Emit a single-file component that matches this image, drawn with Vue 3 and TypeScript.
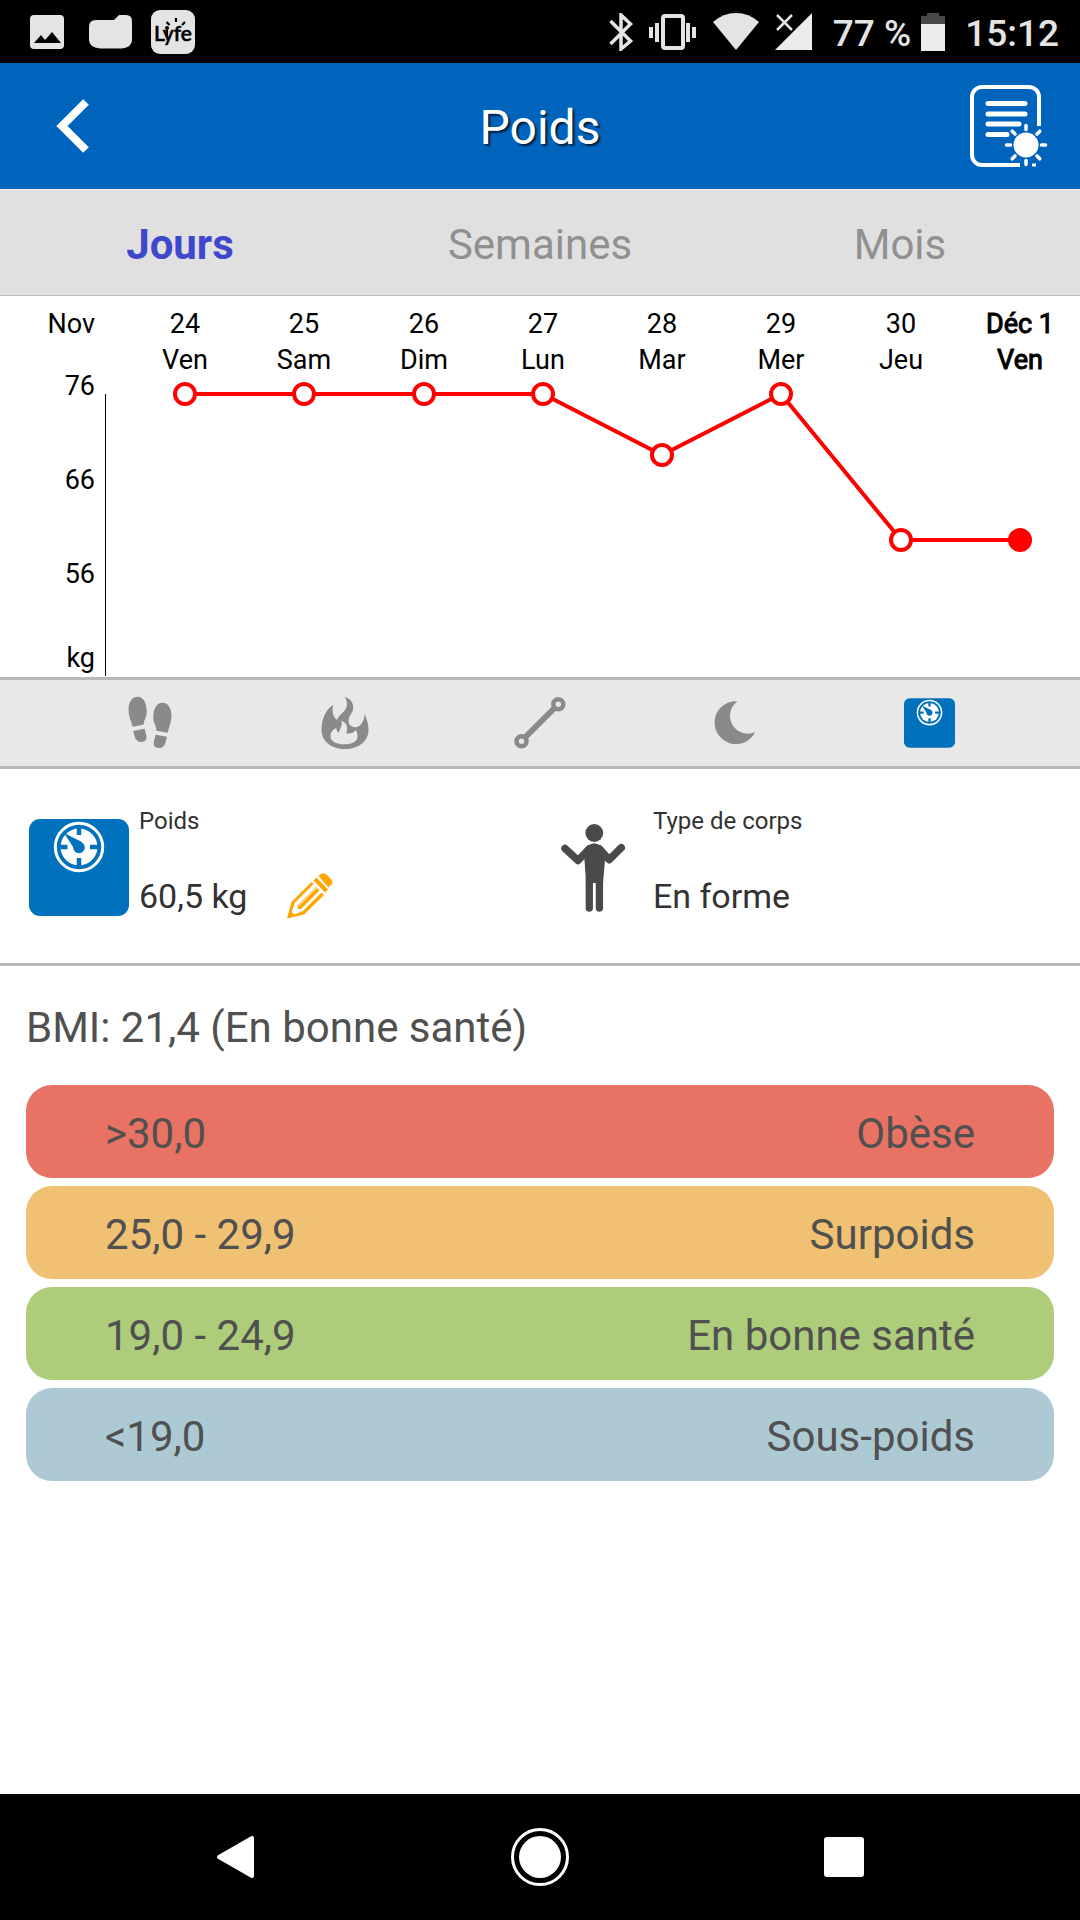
<script setup lang="ts">
import { computed, ref } from 'vue'

interface Reading {
  date: string
  day: string
  weight: number
}

interface Category {
  key: string
  range: string
  label: string
}

const tabs = ['Jours', 'Semaines', 'Mois']
const activeTab = ref('Jours')

const readings: Reading[] = [
  { date: '24', day: 'Ven', weight: 76 },
  { date: '25', day: 'Sam', weight: 76 },
  { date: '26', day: 'Dim', weight: 76 },
  { date: '27', day: 'Lun', weight: 76 },
  { date: '28', day: 'Mar', weight: 69.5 },
  { date: '29', day: 'Mer', weight: 76 },
  { date: '30', day: 'Jeu', weight: 60.5 },
  { date: 'Déc 1', day: 'Ven', weight: 60.5 },
]

const scaleMarks = [76, 66, 56]

const yOf = (kg: number): number => Math.round(98 + (76 - kg) * 9.4)

const points = computed(() =>
  readings.map((r, i) => ({
    ...r,
    x: 185 + Math.round((i * 835) / 7),
    y: yOf(r.weight),
    current: i === readings.length - 1,
  })),
)

const line = computed(() => points.value.map((p) => `${p.x},${p.y}`).join(' '))

const categories: Category[] = [
  { key: 'obese', range: '>30,0', label: 'Obèse' },
  { key: 'over', range: '25,0 - 29,9', label: 'Surpoids' },
  { key: 'healthy', range: '19,0 - 24,9', label: 'En bonne santé' },
  { key: 'under', range: '<19,0', label: 'Sous-poids' },
]

const rays = [0, 45, 90, 135, 180, 225, 270, 315]
</script>

<template>
  <div class="screen">
    <div class="status">
      <div class="notices">
        <svg width="44" height="44" viewBox="0 0 44 44">
          <rect x="5" y="5" width="34" height="34" rx="4" fill="#e4e4e4" />
          <path d="M9 33 L16 25 L20 30 L27 22 L36 33 Z" fill="#000" />
        </svg>
        <svg width="44" height="44" viewBox="0 0 44 44">
          <path d="M1 17 Q1 10 8 10 H26 L31 5 H38 Q44 5 44 11 V30 Q44 37 34 38.500 H12 Q1 37 1 30 Z" fill="#e4e4e4" />
        </svg>
        <svg width="44" height="44" viewBox="0 0 44 44">
          <rect width="44" height="44" rx="9" fill="#e4e4e4" />
          <text x="3" y="31" font-family="Lato, sans-serif" font-size="21" fill="#000" stroke="#000" stroke-width="0.600">Lyfe</text>
          <circle cx="16" cy="18" r="2" fill="#000" />
          <path d="M16 20 V26 M15.500 12 L18.500 15 M25 8 V12 M34 12 L31 15" stroke="#000" stroke-width="2.200" fill="none" />
        </svg>
      </div>
      <div class="system">
        <svg width="24" height="38" viewBox="0 0 24 38">
          <path d="M1.500 8 L21.500 28 L12 36 V2 L21.500 11 L1.500 31" fill="none" stroke="#e4e4e4" stroke-width="3.500" />
        </svg>
        <svg width="48" height="38" viewBox="0 0 48 38">
          <rect x="14" y="3" width="20" height="32" rx="2" fill="none" stroke="#e4e4e4" stroke-width="4" />
          <path d="M2 14 V25 M8 10 V29 M39 10 V29 M45 14 V25" stroke="#e4e4e4" stroke-width="4" />
        </svg>
        <svg width="46" height="38" viewBox="0 0 46 38">
          <path d="M23 37 L0 9 Q10 0 23 0 Q36 0 46 9 Z" fill="#e4e4e4" />
        </svg>
        <svg width="38" height="38" viewBox="0 0 38 38">
          <path d="M37 0 V37 H0 Z" fill="#ececec" />
          <path d="M2 2 L17 17 M17 2 L2 17" stroke="#e4e4e4" stroke-width="2.500" />
        </svg>
        <div class="battery">
          <span>77 %</span>
          <svg width="24" height="38" viewBox="0 0 24 38">
            <path d="M6 0 H18 V3 H24 V11 H0 V3 H6 Z" fill="#484848" />
            <rect y="11" width="24" height="27" fill="#ececec" />
          </svg>
        </div>
        <div class="clock"><span>15:12</span></div>
      </div>
    </div>

    <header class="header">
      <button class="plain back" type="button" aria-label="Retour">
        <svg width="34" height="56" viewBox="0 0 34 56">
          <path d="M30 4 L6 28 L30 52" fill="none" stroke="#fff" stroke-width="8" />
        </svg>
      </button>
      <h1>Poids</h1>
      <button class="plain report" type="button" aria-label="Rapport">
        <svg width="78" height="82" viewBox="0 0 78 82">
          <g fill="none" stroke="#fff">
            <path d="M69 41 V12 A10 10 0 0 0 59 2 H12 A10 10 0 0 0 2 12 V70 A10 10 0 0 0 12 80 H50" stroke-width="4" />
            <path d="M18 18.500 H55 M18 29 H55 M18 39 H49 M18 49.500 H37" stroke-width="5" stroke-linecap="round" />
            <path d="M62 80 H66" stroke-width="3" />
            <path
              v-for="angle in rays"
              :key="angle"
              d="M56 44.500 V40.500"
              stroke-width="3.500"
              stroke-linecap="round"
              :transform="`rotate(${angle} 56 60)`"
            />
          </g>
          <circle cx="56" cy="60" r="12.500" fill="#fff" />
        </svg>
      </button>
    </header>

    <nav class="tabs">
      <button
        v-for="tab in tabs"
        :key="tab"
        class="plain tab"
        :class="{ active: tab === activeTab }"
        type="button"
        @click="activeTab = tab"
      >
        {{ tab }}
      </button>
    </nav>

    <svg class="chart" viewBox="0 0 1080 381" role="img" aria-label="Poids par jour">
      <g class="scale-labels">
        <text x="95" y="37">Nov</text>
        <text v-for="mark in scaleMarks" :key="mark" x="95" :y="yOf(mark) + 1">{{ mark }}</text>
        <text x="95" y="371">kg</text>
      </g>
      <rect x="105" y="98" width="1" height="282" fill="#000" shape-rendering="crispEdges" />
      <g v-for="p in points" :key="p.date" class="day" :class="{ current: p.current }">
        <text :x="p.x" y="37">{{ p.date }}</text>
        <text :x="p.x" y="73">{{ p.day }}</text>
      </g>
      <polyline :points="line" fill="none" stroke="#f00" stroke-width="4" />
      <circle
        v-for="p in points"
        :key="p.date"
        :cx="p.x"
        :cy="p.y"
        r="10"
        :fill="p.current ? '#f00' : '#fff'"
        stroke="#f00"
        stroke-width="4"
      />
    </svg>

    <nav class="metrics">
      <button class="plain" type="button" aria-label="Pas">
        <svg width="60" height="60" viewBox="0 0 60 60" fill="#8a8a8a">
          <path d="M17.500 3.700 C12 3.700 8.500 9 8.500 17 C8.500 23 11 28 12.800 33.700 L23.800 31.500 C23.500 27 26.800 25 26.800 19 C26.800 10 23.500 3.700 17.500 3.700 Z" />
          <path d="M13.200 38 L24.700 35.700 C25 39 26.500 41 26.500 44.500 C26.500 47.500 24 49 21 49 C15.500 49 14.500 43 13.200 38 Z" />
          <path d="M42.500 9.700 C36.500 9.700 33.300 16 33.300 24.500 C33.300 31 36.500 32 36.300 37.700 L47.700 39.700 C49 34 51.500 29 51.500 23 C51.500 15 48 9.700 42.500 9.700 Z" />
          <path d="M35.500 41.700 L47 43.700 C45.500 49 45 55 39.500 55 C36 55 33.700 53.500 33.700 50.500 C33.700 47 35.300 45 35.500 41.700 Z" />
        </svg>
      </button>
      <button class="plain" type="button" aria-label="Calories">
        <svg width="60" height="60" viewBox="0 0 60 60" fill="#8a8a8a" fill-rule="evenodd">
          <path
            d="M29.800 3.700 C36 6 38.500 10 38.200 15 C38 20 33.500 23 33.500 28 C33.500 32 37 34.500 40.500 34.300 C46 34 49 28 49.800 21 C52 27 53.500 31 53.500 37 C53.500 48 44 56 30 56 C16 56 6.500 48 6.500 37 C6.500 26 11 16 18.300 12 C17 17 17 23 22.200 27 C23.500 21 32 19 32 11 C32 8 31 6 29.800 3.700 Z
            M26 27.500 C28.500 31 24.500 36 24 39.700 C22 38.500 21.500 37 21.300 35 C17 37 15.500 40 15.500 43 C15.500 48.500 21 51.300 29.500 51.300 C38 51.300 42.500 48 42.500 43.500 C42.500 41 42.500 39 40.500 37.300 C38.500 40 35 41 31.200 40.300 C32 38 32.500 36 31.800 33 C31.500 30.500 28.500 28.500 26 27.500 Z"
          />
        </svg>
      </button>
      <button class="plain" type="button" aria-label="Distance">
        <svg width="60" height="60" viewBox="0 0 60 60" fill="none" stroke="#8a8a8a">
          <path d="M15 44.500 L44.500 15" stroke-width="6" />
          <circle cx="11.500" cy="48.300" r="5" stroke-width="4.500" />
          <circle cx="48.300" cy="11.300" r="5" stroke-width="4.500" />
        </svg>
      </button>
      <button class="plain" type="button" aria-label="Sommeil">
        <svg width="60" height="60" viewBox="0 0 60 60" fill="#8a8a8a">
          <path d="M32.500 8.300 A21.400 21.400 0 1 0 50.200 39 A17.800 17.800 0 0 1 32.500 8.300 Z" />
        </svg>
      </button>
      <button class="plain" type="button" aria-label="Poids">
        <svg width="51" height="50" viewBox="0 0 100 97">
          <g id="weighing-scale">
            <rect width="100" height="97" rx="11" fill="#0072bd" />
            <circle cx="50" cy="28" r="23.700" fill="none" stroke="#fff" stroke-width="3" />
            <circle cx="50" cy="28" r="18.500" fill="#fff" />
            <path d="M50 8 V16 M50 39 V48 M31 28 H38.500 M61 28 H69" stroke="#0072bd" stroke-width="4.500" />
            <path d="M35 14 L53 23 L46 31 Z" fill="#0072bd" />
            <circle cx="50" cy="28.500" r="5.800" fill="#0072bd" />
          </g>
        </svg>
      </button>
    </nav>

    <section class="summary">
      <div class="fact weight">
        <svg width="100" height="97" viewBox="0 0 100 97"><use href="#weighing-scale" /></svg>
        <div class="fact-text">
          <span class="fact-label">Poids</span>
          <div class="fact-value">
            <span>60,5 kg</span>
            <button class="plain" type="button" aria-label="Modifier le poids">
              <svg width="46" height="46" viewBox="0 0 46 46">
                <g fill="#ffa500">
                  <path d="M31.500 3 Q36 -2 40 2 L43.500 5.500 Q46 8 45 11 L41.500 14.500 Z" />
                  <path d="M26.500 7.500 L29.500 4.500 L41 16.500 L38 19.500 Z" />
                  <path d="M4.500 29 L24.500 9 L26.500 11 L8 29.500 L4.500 39 L7.500 41.500 L16 38 L34.500 19.500 L37 22 L17 41.500 L0 45.500 Z" />
                  <path d="M10.500 32.500 L29 14 L32.500 17.500 L14 36 L11 36 Z" />
                </g>
                <path d="M11.500 33 L29.500 15" stroke="#fff" stroke-width="1" />
              </svg>
            </button>
          </div>
        </div>
      </div>
      <div class="fact body-type">
        <svg width="64" height="88" viewBox="0 0 64 88" fill="#4a4a4a">
          <circle cx="33.300" cy="9" r="8.900" />
          <path d="M23.500 36 Q20 22 33.300 19.300 Q47 22 44 36 L42 59 H25 Z" />
          <path
            d="M4 24.500 L17 36.500 L28 25 M60.300 23.700 L48.300 35.700 L38.500 25"
            fill="none"
            stroke="#4a4a4a"
            stroke-width="7.500"
            stroke-linecap="round"
            stroke-linejoin="round"
          />
          <path d="M28.300 56 V84 M38.400 56 V84" stroke="#4a4a4a" stroke-width="7.300" stroke-linecap="round" />
        </svg>
        <div class="fact-text">
          <span class="fact-label">Type de corps</span>
          <div class="fact-value">En forme</div>
        </div>
      </div>
    </section>

    <main class="bmi">
      <h2>BMI: 21,4 (En bonne santé)</h2>
      <dl>
        <div v-for="c in categories" :key="c.key" class="band" :class="c.key">
          <dt>{{ c.range }}</dt>
          <dd>{{ c.label }}</dd>
        </div>
      </dl>
    </main>

    <nav class="system-nav">
      <button class="plain" type="button" aria-label="Précédent">
        <svg width="60" height="60" viewBox="0 0 60 60">
          <path d="M46 11 V49 L13 30 Z" fill="#fff" stroke="#fff" stroke-width="4" stroke-linejoin="round" />
        </svg>
      </button>
      <button class="plain" type="button" aria-label="Accueil">
        <svg width="60" height="60" viewBox="0 0 60 60">
          <circle cx="30" cy="30" r="27.500" fill="none" stroke="#fff" stroke-width="3" />
          <circle cx="30" cy="30" r="21" fill="#fff" />
        </svg>
      </button>
      <button class="plain" type="button" aria-label="Applications récentes">
        <svg width="60" height="60" viewBox="0 0 60 60">
          <rect x="10" y="10" width="40" height="40" rx="3" fill="#fff" />
        </svg>
      </button>
    </nav>
  </div>
</template>

<style>
body {
  background: #fff;
}
</style>

<style scoped>
.screen {
  display: flex;
  flex-direction: column;
  min-height: 100vh;
  background: #fff;
  font-family: Roboto, "Liberation Sans", sans-serif;
}

svg {
  display: block;
  flex: none;
}

h1,
h2,
dl,
dd {
  margin: 0;
  font-weight: 400;
}

.plain {
  display: flex;
  align-items: center;
  justify-content: center;
  padding: 0;
  border: 0;
  background: none;
  color: inherit;
  font: inherit;
  cursor: pointer;
}

.status {
  display: flex;
  justify-content: space-between;
  align-items: center;
  height: 63px;
  padding: 0 21px 0 25px;
  box-sizing: border-box;
  background: #000;
  color: #e4e4e4;
  font-size: 37px;
  font-weight: 500;
  line-height: 44px;
}

.notices {
  display: flex;
  gap: 19px;
}

.system {
  display: flex;
  align-items: center;
  gap: 16px;
}

.battery {
  display: flex;
  align-items: center;
  gap: 10px;
}

.battery,
.clock {
  margin-left: 4px;
}

.battery span,
.clock span {
  display: block;
  padding-top: 4px;
}

.header {
  display: grid;
  grid-template-columns: 1fr auto 1fr;
  align-items: center;
  height: 126px;
  padding: 0 32px;
  background: #0064bd;
  color: #fff;
}

.header h1 {
  padding-top: 3px;
  font-size: 48px;
  line-height: 56px;
  text-shadow: 2px 2px 2px rgba(0, 0, 0, 0.7);
}

.back {
  justify-self: start;
  padding-left: 24px;
}

.report {
  justify-self: end;
}

.tabs {
  display: grid;
  grid-template-columns: repeat(3, 1fr);
  height: 107px;
  box-sizing: border-box;
  border-top: 1px solid #efefef;
  border-bottom: 1px solid #bdbdbd;
  background: #e0e0e0;
  color: #909090;
  font-size: 42px;
  line-height: 50px;
}

.tab {
  padding-top: 4px;
}

.tab.active {
  color: #3f48cc;
  font-weight: 700;
}

.chart {
  width: 100%;
  font-size: 27px;
}

.scale-labels {
  text-anchor: end;
}

.day {
  text-anchor: middle;
}

.day.current {
  stroke: #000;
  stroke-width: 1px;
}

.metrics {
  display: grid;
  grid-template-columns: repeat(5, 1fr);
  height: 86px;
  padding: 0 53px 0 52px;
  border-top: 3px solid #b9b9b9;
  border-bottom: 3px solid #b9b9b9;
  background: #e8e8e8;
}

.summary {
  display: grid;
  grid-template-columns: 1fr 1fr;
  padding: 36px 0 33px;
  border-bottom: 3px solid #b9b9b9;
  color: #323232;
}

.fact {
  display: flex;
  align-items: center;
}

.weight {
  gap: 10px;
  padding-left: 29px;
}

.body-type {
  gap: 28px;
  padding-left: 21px;
}

.fact-text {
  display: flex;
  flex-direction: column;
  gap: 36px;
  padding-bottom: 11px;
}

.fact-label {
  font-size: 24px;
  line-height: 32px;
}

.fact-value {
  display: flex;
  gap: 40px;
  font-size: 34px;
  line-height: 46px;
}

.bmi {
  flex: 1;
  padding: 37px 26px;
  color: #505050;
  font-size: 42px;
  line-height: 50px;
}

.bmi h2 {
  font-size: 42px;
}

.bmi dl {
  display: flex;
  flex-direction: column;
  gap: 8px;
  margin-top: 32px;
}

.band {
  display: flex;
  justify-content: space-between;
  align-items: center;
  height: 93px;
  padding: 4px 79px 0;
  box-sizing: border-box;
  border-radius: 26px;
}

.obese {
  background: #e87264;
}

.over {
  background: #f0c172;
}

.healthy {
  background: #aecd7a;
}

.under {
  background: #adcad4;
}

.system-nav {
  display: grid;
  grid-template-columns: repeat(3, 1fr);
  height: 126px;
  padding: 0 84px;
  background: #000;
}
</style>
